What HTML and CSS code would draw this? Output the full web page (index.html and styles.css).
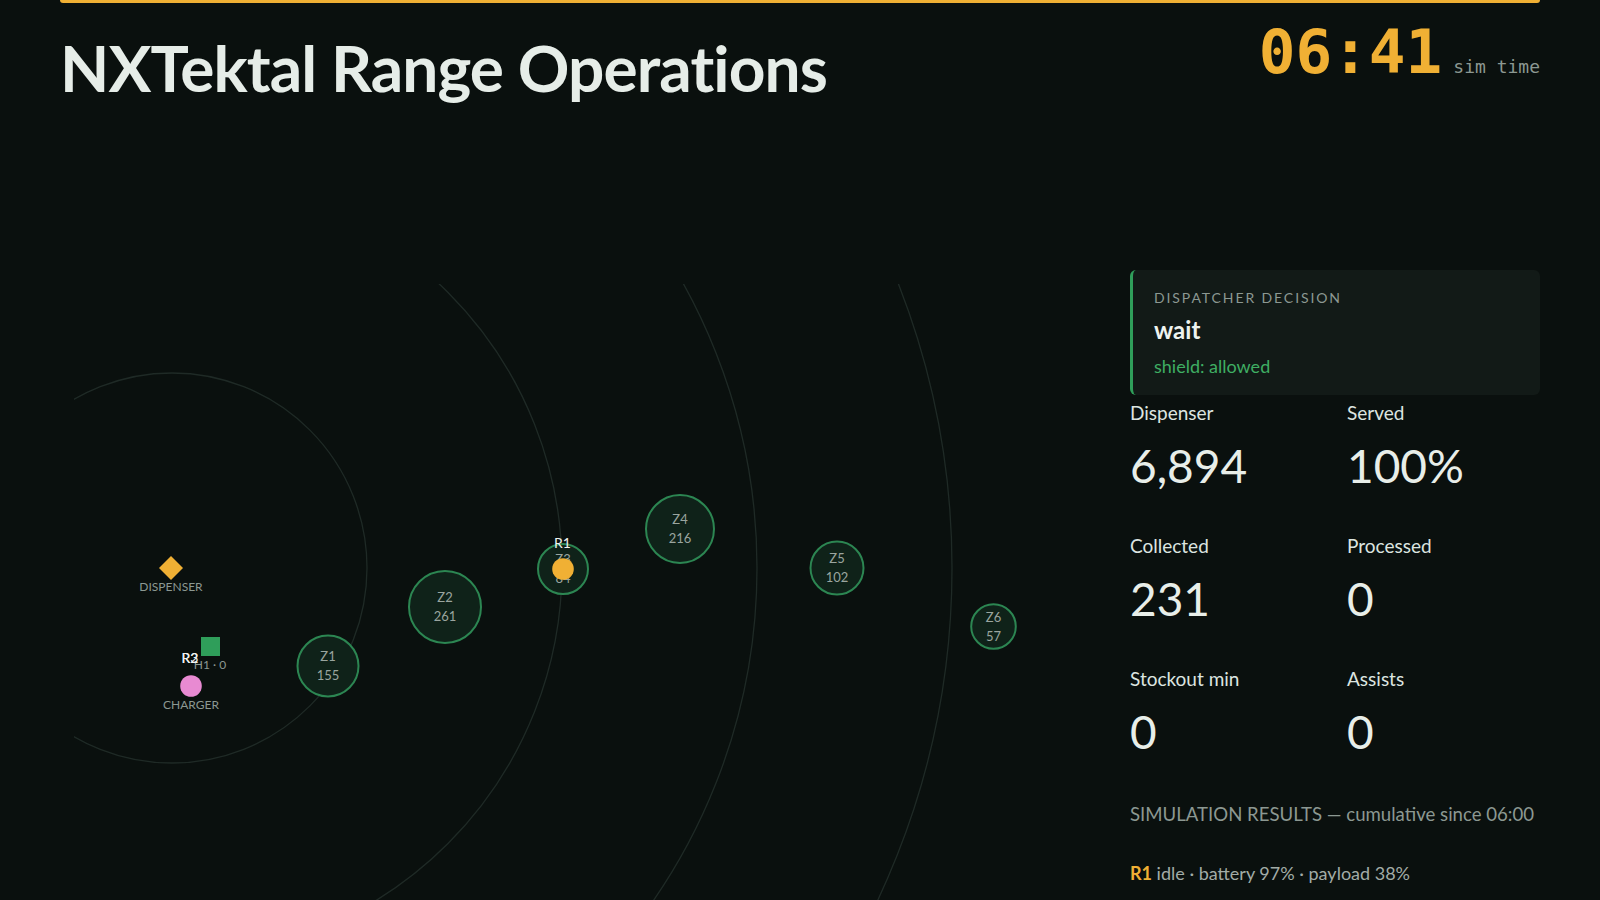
FILE: index.html
```html
<!DOCTYPE html>
<html lang="en">
<head>
  <meta charset="UTF-8">
  <title>NXTektal Range Operations</title>
  <link rel="stylesheet" href="styles.css">
</head>
<body>
  <div class="page">
    <div class="topbar"></div>

    <header class="header">
      <h1>NXTektal Range Operations</h1>
      <div class="clock">
        <span class="clock-time">06:41</span>
        <span class="clock-label">sim time</span>
      </div>
    </header>

    <main class="main">
      <div class="map">
        <svg class="range" viewBox="0 0 1012 640" width="1012" height="640">
          <!-- distance rings around the hub -->
          <g class="rings">
            <circle cx="98" cy="284" r="195"/>
            <circle cx="98" cy="284" r="390"/>
            <circle cx="98" cy="284" r="585"/>
            <circle cx="98" cy="284" r="780"/>
          </g>

          <!-- zones: radius follows the ball count -->
          <g class="zone">
            <circle cx="254" cy="382" r="30.5"/>
            <text x="254" y="377">Z1</text>
            <text x="254" y="396">155</text>
          </g>
          <g class="zone">
            <circle cx="371" cy="323" r="36"/>
            <text x="371" y="318">Z2</text>
            <text x="371" y="337">261</text>
          </g>
          <g class="zone">
            <circle cx="489" cy="285" r="25"/>
            <text x="489" y="280">Z3</text>
            <text x="489" y="299">84</text>
          </g>
          <g class="zone">
            <circle cx="606" cy="245" r="34"/>
            <text x="606" y="240">Z4</text>
            <text x="606" y="259">216</text>
          </g>
          <g class="zone">
            <circle cx="763" cy="284" r="26.5"/>
            <text x="763" y="279">Z5</text>
            <text x="763" y="298">102</text>
          </g>
          <g class="zone">
            <circle cx="919.5" cy="342.5" r="22.3"/>
            <text x="919.5" y="337.5">Z6</text>
            <text x="919.5" y="356.5">57</text>
          </g>

          <!-- hub -->
          <polygon class="dispenser" points="97,272 109,284 97,296 85,284"/>
          <text class="hub-label" x="97" y="307">DISPENSER</text>

          <rect class="hopper" x="127" y="353" width="19" height="19"/>
          <text class="hub-label" x="136" y="385">H1 · 0</text>

          <text class="robot-label" x="116" y="379">R3</text>
          <text class="robot-label" x="116" y="379">R2</text>

          <circle class="charger" cx="117" cy="402" r="10.8"/>
          <text class="hub-label" x="117" y="425">CHARGER</text>

          <!-- robots -->
          <circle class="robot" cx="489" cy="285" r="10.8"/>
          <text class="robot-label" x="488.5" y="264">R1</text>
        </svg>
      </div>

      <aside class="side">
        <div class="decision">
          <div class="decision-label">Dispatcher decision</div>
          <div class="decision-action">wait</div>
          <div class="decision-shield">shield: allowed</div>
        </div>

        <div class="stats">
          <div class="stat">
            <div class="stat-label">Dispenser</div>
            <div class="stat-value">6,894</div>
          </div>
          <div class="stat">
            <div class="stat-label">Served</div>
            <div class="stat-value">100%</div>
          </div>
          <div class="stat">
            <div class="stat-label">Collected</div>
            <div class="stat-value">231</div>
          </div>
          <div class="stat">
            <div class="stat-label">Processed</div>
            <div class="stat-value">0</div>
          </div>
          <div class="stat">
            <div class="stat-label">Stockout min</div>
            <div class="stat-value">0</div>
          </div>
          <div class="stat">
            <div class="stat-label">Assists</div>
            <div class="stat-value">0</div>
          </div>
        </div>

        <div class="summary">SIMULATION RESULTS — cumulative since 06:00</div>
        <div class="robot-status"><strong>R1</strong> idle · battery 97% · payload 38%</div>
      </aside>
    </main>
  </div>
</body>
</html>
```

FILE: styles.css
```css
html, body {
  margin: 0;
  height: 100%;
  overflow: hidden;
  background: #0a100e;
}
body {
  font-family: Lato, "Noto Sans", sans-serif;
  color: #e6ede8;
}
.page {
  padding: 0 60px;
}
.topbar {
  height: 3px;
  background: #f0b034;
  border-radius: 0 0 3px 3px;
}
.header {
  display: flex;
  justify-content: space-between;
  align-items: flex-start;
  height: 267px;
}
h1 {
  margin: 25px 0 0;
  font-size: 64px;
  font-weight: 700;
  letter-spacing: -0.9px;
  line-height: 80px;
  color: #e6ede8;
}
.clock {
  display: flex;
  align-items: baseline;
  gap: 11px;
  margin-top: 17px;
}
.clock-time {
  font-family: "DejaVu Sans Mono", monospace;
  font-size: 61px;
  font-weight: bold;
  line-height: 64px;
  color: #f0b034;
}
.clock-label {
  font-family: "DejaVu Sans Mono", monospace;
  font-size: 18px;
  color: #8c9892;
}
.main {
  display: grid;
  grid-template-columns: 1fr 410px;
  gap: 30px;
}
.map {
  padding: 14px;
}
.range {
  display: block;
  font-family: Lato, "Noto Sans", sans-serif;
}
.rings circle {
  fill: none;
  stroke: #1f2a26;
  stroke-width: 1.3;
}
.zone circle {
  fill: #0f2219;
  stroke: #2c8652;
  stroke-width: 2;
}
.zone text {
  font-size: 13px;
  fill: #9aa59f;
  text-anchor: middle;
}
.dispenser {
  fill: #f0b034;
}
.hopper {
  fill: #2f9e5a;
}
.charger {
  fill: #e88ad2;
}
.robot {
  fill: #f0b034;
}
.hub-label {
  font-size: 12px;
  fill: #8c9892;
  text-anchor: middle;
}
.robot-label {
  font-size: 14px;
  fill: #f0f3f1;
  text-anchor: middle;
}
.decision {
  background: #121a17;
  border-left: 3px solid #2f9e5a;
  border-radius: 6px;
  padding: 19px 21px 18px;
}
.decision-label {
  font-size: 14px;
  line-height: 18px;
  letter-spacing: 1.9px;
  text-transform: uppercase;
  color: #8c9892;
}
.decision-action {
  margin-top: 8px;
  font-size: 24px;
  line-height: 30px;
  font-weight: bold;
  color: #eef3ef;
}
.decision-shield {
  margin-top: 10px;
  font-size: 18px;
  line-height: 22px;
  color: #3fae63;
}
.stats {
  display: grid;
  grid-template-columns: 1fr 1fr;
  column-gap: 24px;
  row-gap: 40px;
  margin-top: 6px;
}
.stat-label {
  font-size: 19px;
  line-height: 24px;
  color: #dde5e0;
}
.stat-value {
  margin-top: 13px;
  font-size: 46px;
  line-height: 56px;
  color: #e8eee9;
}
.summary {
  margin-top: 42px;
  font-size: 18.6px;
  line-height: 24px;
  color: #8c9892;
}
.robot-status {
  margin-top: 35px;
  font-size: 18px;
  line-height: 24px;
  color: #a2aca7;
}
.robot-status strong {
  color: #f0b034;
}
```
